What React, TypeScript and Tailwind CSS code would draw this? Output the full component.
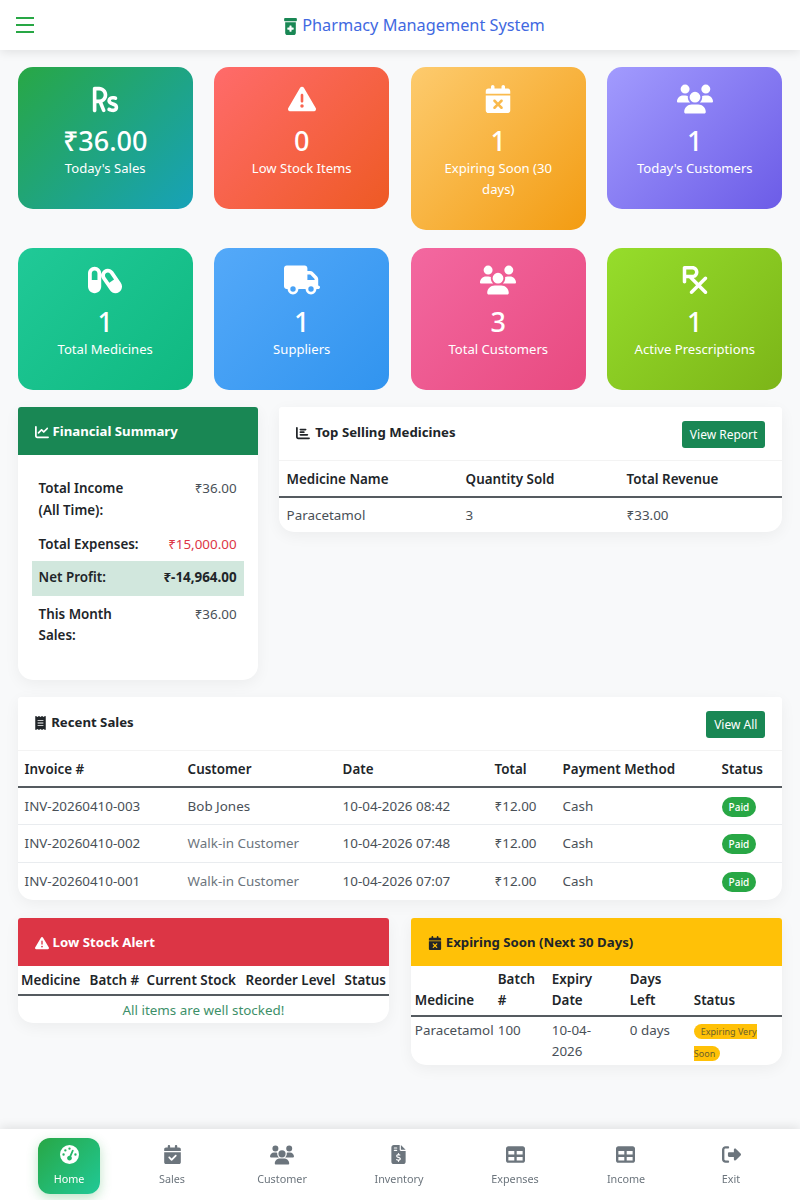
import type { ReactNode } from "react";
import {
  FaRupeeSign, FaTriangleExclamation, FaCalendarXmark, FaUsers, FaCapsules, FaTruck, FaPrescription,
  FaChartLine, FaChartBar, FaReceipt, FaPrescriptionBottleMedical, FaGaugeHigh, FaCalendarCheck,
  FaFileInvoiceDollar, FaTable, FaRightFromBracket,
} from "react-icons/fa6";

const stats = [
  { icon: <FaRupeeSign size={29} />, value: "₹36.00", label: "Today's Sales", bg: "bg-[linear-gradient(135deg,#28a745,#17a2b8)]" },
  { icon: <FaTriangleExclamation size={28} />, value: "0", label: "Low Stock Items", bg: "bg-[linear-gradient(135deg,#ff6b6b,#ee5a24)]" },
  { icon: <FaCalendarXmark size={28} />, value: "1", label: "Expiring Soon (30 days)", bg: "bg-[linear-gradient(135deg,#fdcb6e,#f39c12)]" },
  { icon: <FaUsers size={36} />, value: "1", label: "Today's Customers", bg: "bg-[linear-gradient(135deg,#a29bfe,#6c5ce7)]" },
  { icon: <FaCapsules size={34} />, value: "1", label: "Total Medicines", bg: "bg-[linear-gradient(135deg,#20c997,#10b981)]" },
  { icon: <FaTruck size={36} />, value: "1", label: "Suppliers", bg: "bg-[linear-gradient(135deg,#54a9f9,#3194ef)]" },
  { icon: <FaUsers size={36} />, value: "3", label: "Total Customers", bg: "bg-[linear-gradient(135deg,#f368a0,#e84a80)]" },
  { icon: <FaPrescription size={28} />, value: "1", label: "Active Prescriptions", bg: "bg-[linear-gradient(135deg,#96dd2b,#7cb518)]" },
];

const sales = [
  { invoice: "INV-20260410-003", customer: "Bob Jones", date: "10-04-2026 08:42", walkIn: false },
  { invoice: "INV-20260410-002", customer: "Walk-in Customer", date: "10-04-2026 07:48", walkIn: true },
  { invoice: "INV-20260410-001", customer: "Walk-in Customer", date: "10-04-2026 07:07", walkIn: true },
];

const nav = [
  { icon: <FaGaugeHigh size={19} />, label: "Home", active: true },
  { icon: <FaCalendarCheck size={19} />, label: "Sales" },
  { icon: <FaUsers size={24} />, label: "Customer" },
  { icon: <FaFileInvoiceDollar size={19} />, label: "Inventory" },
  { icon: <FaTable size={19} />, label: "Expenses" },
  { icon: <FaTable size={19} />, label: "Income" },
  { icon: <FaRightFromBracket size={19} />, label: "Exit" },
];

const card = "rounded-t-[3px] rounded-b-[15px] bg-white shadow-[0_4px_15px_rgba(0,0,0,0.05)]";
const thBase = "border-b-2 border-[#555b60] text-left font-semibold text-[#212529]";
const th = `${thBase} pt-[2px]`;
const thTall = `${thBase} pt-[3px]`;

function StatCard({ icon, value, label, bg }: { icon: ReactNode; value: string; label: string; bg: string }) {
  return (
    <div className={`rounded-[15px] px-6 pt-4 pb-[30px] text-center text-white ${bg}`}>
      <div className="flex h-8 items-center justify-center">{icon}</div>
      <div className="mt-[9px] text-[27px] leading-[34px] font-medium">{value}</div>
      <div className="text-[13.1px] leading-[21px]">{label}</div>
    </div>
  );
}

function CardHeader({ icon, title, color }: { icon: ReactNode; title: string; color: string }) {
  return (
    <div className={`flex h-12 items-center gap-1 rounded-t-[3px] pt-[2px] pl-[17px] text-[13.2px] font-bold ${color}`}>
      {icon}
      {title}
    </div>
  );
}

function TitleBar({ icon, title, action }: { icon: ReactNode; title: string; action: string }) {
  return (
    <div className="flex h-[54px] items-start justify-between border-b border-[#f3f3f3] pt-[14px] pr-[17px] pl-[17.6px]">
      <div className="mt-px flex items-center gap-[5px] text-[13.2px] leading-[21.6px] font-bold text-[#212529]">
        {icon}
        {title}
      </div>
      <button className="h-[27px] rounded-[3px] bg-[#198754] px-[8px] text-[12px] text-white">{action}</button>
    </div>
  );
}

export default function App() {
  return (
    <div className="min-h-screen bg-[#f8f9fa] font-['Noto_Sans',sans-serif] text-[13.4px] leading-[21.6px] text-[#495057]">
      <header className="flex h-[50px] items-center bg-white pr-[5px] pl-4 shadow-[0_2px_10px_rgba(0,0,0,0.1)]">
        <svg width="18" height="16" viewBox="0 0 18 16" className="text-[#28a745]">
          <path d="M0 1h18M0 8h18M0 15h18" stroke="currentColor" strokeWidth="2" />
        </svg>
        <div className="flex flex-1 items-center justify-center gap-[5px] pt-[2px] text-[16.3px] text-[#4169e1]">
          <FaPrescriptionBottleMedical className="h-[17px] w-[13px] text-[#198754]" />
          Pharmacy Management System
        </div>
      </header>

      <main className="px-[17.6px] pt-[17px]">
        <section className="grid grid-cols-4 items-start gap-x-[21.3px] gap-y-[18px]">
          {stats.map((s) => (
            <StatCard key={s.label} {...s} />
          ))}
        </section>

        <section className="mt-[17px] flex items-start gap-[21px]">
          <div className={`h-[273px] w-[240px] shrink-0 ${card}`}>
            <CardHeader icon={<FaChartLine size={14} />} title="Financial Summary" color="bg-[#198754] text-white" />
            <div className="px-[14px] pt-[23px]">
              <div className="flex justify-between px-[7px]">
                <span className="w-[100px] font-semibold text-[#212529]">Total Income (All Time):</span>
                <span>₹36.00</span>
              </div>
              <div className="mt-[13px] flex justify-between px-[7px]">
                <span className="font-semibold text-[#212529]">Total Expenses:</span>
                <span className="text-[#dc3545]">₹15,000.00</span>
              </div>
              <div className="mt-[5px] flex h-[35px] items-center justify-between bg-[#d1e7dd] px-[7px] font-bold text-[#212529]">
                <span className="font-semibold">Net Profit:</span>
                <span>₹-14,964.00</span>
              </div>
              <div className="mt-[8px] flex justify-between px-[7px]">
                <span className="w-[100px] font-semibold text-[#212529]">This Month Sales:</span>
                <span>₹36.00</span>
              </div>
            </div>
          </div>

          <div className={`min-w-0 flex-1 ${card}`}>
            <TitleBar icon={<FaChartBar size={14} />} title="Top Selling Medicines" action="View Report" />
            <table className="w-full table-fixed">
              <thead>
                <tr className="h-[36px]">
                  <th className={`${th} w-[179px] pl-2`}>Medicine Name</th>
                  <th className={`${th} w-[161px] pl-2`}>Quantity Sold</th>
                  <th className={`${th} pl-2`}>Total Revenue</th>
                </tr>
              </thead>
              <tbody>
                <tr className="h-[35px]">
                  <td className="pt-[2px] pl-2">Paracetamol</td>
                  <td className="pt-[2px] pl-2">3</td>
                  <td className="pt-[2px] pl-2">₹33.00</td>
                </tr>
              </tbody>
            </table>
          </div>
        </section>

        <section className={`mt-[17px] ${card}`}>
          <TitleBar icon={<FaReceipt className="h-[14px] w-[11px]" />} title="Recent Sales" action="View All" />
          <table className="w-full table-fixed">
            <thead>
              <tr className="h-[36px]">
                <th className={`${th} w-[163px] pl-[7px]`}>Invoice #</th>
                <th className={`${th} w-[155px] pl-[7px]`}>Customer</th>
                <th className={`${th} w-[152px] pl-[7px]`}>Date</th>
                <th className={`${th} w-[68px] pl-[7px]`}>Total</th>
                <th className={`${th} w-[159px] pl-[7px]`}>Payment Method</th>
                <th className={`${th} pl-[7px]`}>Status</th>
              </tr>
            </thead>
            <tbody>
              {sales.map((s, i) => (
                <tr key={s.invoice} className={`h-[37.5px] ${i < 2 ? "border-b border-[#e9ecef]" : ""}`}>
                  <td className="pt-[2px] pl-[7px]">{s.invoice}</td>
                  <td className={`pt-[2px] pl-[7px] ${s.walkIn ? "text-[#6c757d]" : ""}`}>{s.customer}</td>
                  <td className="pt-[2px] pl-[7px]">{s.date}</td>
                  <td className="pt-[2px] pl-[7px]">₹12.00</td>
                  <td className="pt-[2px] pl-[7px]">Cash</td>
                  <td className="pt-[2px] pl-[7px]">
                    <span className="inline-block h-5 rounded-full bg-[#28a745] px-[7px] text-[10px] leading-5 font-medium text-white">Paid</span>
                  </td>
                </tr>
              ))}
            </tbody>
          </table>
        </section>

        <section className="mt-[18px] grid grid-cols-2 items-start gap-x-[21.6px]">
          <div className={card}>
            <CardHeader icon={<FaTriangleExclamation size={14} />} title="Low Stock Alert" color="bg-[#dc3545] text-white" />
            <table className="w-full table-fixed">
              <thead>
                <tr className="h-[29px] whitespace-nowrap">
                  <th className={`${thTall} w-[68.5px] pl-[3.5px]`}>Medicine</th>
                  <th className={`${thTall} w-[57px] pl-[3.5px]`}>Batch #</th>
                  <th className={`${thTall} w-[99px] pl-[3.5px]`}>Current Stock</th>
                  <th className={`${thTall} w-[99px] pl-[3.5px]`}>Reorder Level</th>
                  <th className={`${thTall} pl-[3.5px]`}>Status</th>
                </tr>
              </thead>
              <tbody>
                <tr className="h-[28px]">
                  <td colSpan={5} className="pt-[3px] text-center text-[#3d9069]">All items are well stocked!</td>
                </tr>
              </tbody>
            </table>
          </div>

          <div className={card}>
            <CardHeader icon={<FaCalendarXmark size={14} />} title="Expiring Soon (Next 30 Days)" color="bg-[#ffc107] text-[#212529]" />
            <table className="w-full table-fixed">
              <thead>
                <tr className="align-bottom">
                  <th className={`${thTall} w-[83px] pb-[3px] pl-1`}>Medicine</th>
                  <th className={`${thTall} w-[54px] pr-3 pb-[3px] pl-1`}>Batch #</th>
                  <th className={`${thTall} w-[78px] pr-3 pb-[3px] pl-1`}>Expiry Date</th>
                  <th className={`${thTall} w-[64px] pr-3 pb-[3px] pl-1`}>Days Left</th>
                  <th className={`${thTall} pb-[3px] pl-1`}>Status</th>
                </tr>
              </thead>
              <tbody>
                <tr className="h-[48px] align-top">
                  <td className="pt-[3px] pl-1">Paracetamol</td>
                  <td className="pt-[3px] pl-1">100</td>
                  <td className="pt-[3px] pr-3 pl-1">10-04-2026</td>
                  <td className="pt-[3px] pl-1">0 days</td>
                  <td className="pt-[3px] pr-[18px] pl-1">
                    <span className="rounded-full bg-[#ffc107] py-px pr-[5px] pl-[7px] text-[9px] text-[#6b5f2a]">Expiring Very Soon</span>
                  </td>
                </tr>
              </tbody>
            </table>
          </div>
        </section>
      </main>

      <nav className="fixed inset-x-0 bottom-0 grid h-[71px] grid-cols-[138px_68px_152px_82px_150px_72px_138px] items-center bg-white pt-[2px] shadow-[0_-2px_10px_rgba(0,0,0,0.1)]">
        {nav.map((n) => (
          <div key={n.label} className="flex justify-center">
            <div className={`flex h-14 flex-col items-center justify-center gap-[7px] rounded-xl px-4 text-[10.8px] leading-[15px] ${n.active ? "bg-[linear-gradient(135deg,#28a745,#20c997)] text-white shadow-[0_4px_12px_rgba(40,167,69,0.3)]" : "text-[#6c757d]"}`}>
              <span className="flex h-[19px] items-center">{n.icon}</span>
              {n.label}
            </div>
          </div>
        ))}
      </nav>
    </div>
  );
}
